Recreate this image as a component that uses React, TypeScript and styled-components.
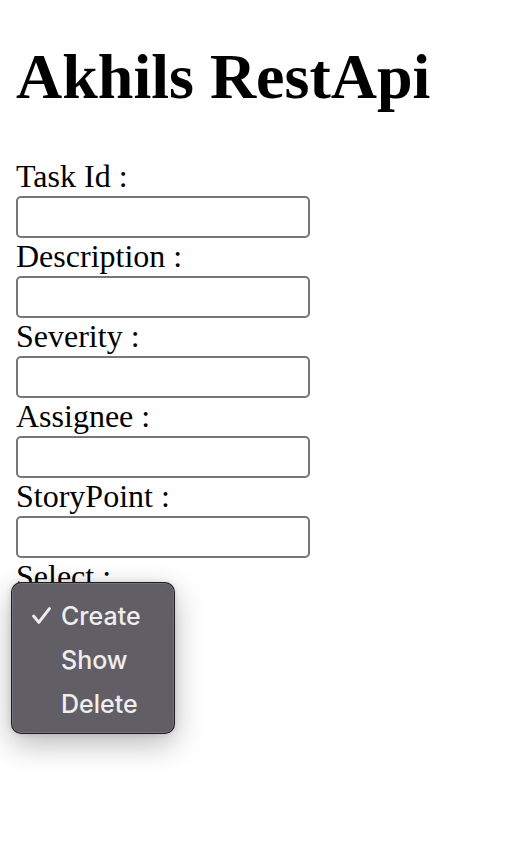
import styled, { createGlobalStyle } from "styled-components";

const GlobalStyle = createGlobalStyle`
  html, body {
    margin: 0;
    padding: 0;
    background: #ffffff;
  }
  body {
    font-family: "Liberation Serif", "Times New Roman", serif;
    color: #000000;
  }
`;

const StyledPage = styled.main`
  padding: 40px 16px 0 16px;
  min-height: 852px;
  box-sizing: border-box;
`;

const StyledTitle = styled.h1`
  margin: 0 0 44px 0;
  font-size: 64px;
  line-height: 74px;
  font-weight: 700;
`;

const StyledForm = styled.form`
  display: flex;
  flex-direction: column;
  align-items: flex-start;
`;

const StyledLabel = styled.label`
  display: block;
  font-size: 32px;
  line-height: 36px;
  height: 36px;
  white-space: nowrap;
`;

const StyledInput = styled.input`
  display: block;
  box-sizing: border-box;
  margin: 2px 0 0 0;
  width: 294px;
  height: 42px;
  border: 2px solid #767676;
  border-radius: 5px;
  background: #ffffff;
  padding: 2px 4px;
  font-size: 26px;
`;

const StyledSelectWrap = styled.div`
  position: relative;
  margin-top: 2px;
`;

const StyledSelect = styled.select`
  display: block;
  width: 140px;
  height: 40px;
  font-size: 26px;
`;

const StyledPopup = styled.ul`
  position: absolute;
  left: -5px;
  top: -14px;
  box-sizing: border-box;
  width: 164px;
  height: 152px;
  margin: 0;
  padding: 11px 0 9px 0;
  list-style: none;
  background: #625e66;
  border: 1px solid rgba(20, 18, 22, 0.85);
  border-radius: 10px;
  box-shadow: inset 0 0 0 1px rgba(255, 255, 255, 0.12),
    0 10px 30px rgba(0, 0, 0, 0.28), 0 0 6px rgba(0, 0, 0, 0.12);
`;

const StyledOption = styled.li`
  position: relative;
  height: 44px;
  line-height: 44px;
  padding-left: 49px;
  font-family: Inter, "Noto Sans", sans-serif;
  font-size: 25px;
  font-weight: 500;
  color: #eeeeee;
`;

const StyledCheck = styled.svg`
  position: absolute;
  left: 20px;
  top: 13px;
  width: 19px;
  height: 17px;
`;

const fields = ["Task Id :", "Description :", "Severity :", "Assignee :", "StoryPoint :"];
const options = ["Create", "Show", "Delete"];

const App = () => {
  return (
    <>
      <GlobalStyle />
      <StyledPage>
        <StyledTitle>Akhils RestApi</StyledTitle>
        <StyledForm>
          {fields.map((f) => (
            <div key={f}>
              <StyledLabel>{f}</StyledLabel>
              <StyledInput type="text" />
            </div>
          ))}
          <StyledLabel>Select :</StyledLabel>
          <StyledSelectWrap>
            <StyledSelect defaultValue="Create">
              {options.map((o) => (
                <option key={o}>{o}</option>
              ))}
            </StyledSelect>
            <StyledPopup>
              {options.map((o, i) => (
                <StyledOption key={o}>
                  {i === 0 && (
                    <StyledCheck viewBox="0 0 18 16">
                      <path
                        d="M1.5 8.5 L6.5 14.5 L16.5 1.5"
                        fill="none"
                        stroke="#eeeeee"
                        strokeWidth="2.8"
                        strokeLinecap="round"
                        strokeLinejoin="round"
                      />
                    </StyledCheck>
                  )}
                  {o}
                </StyledOption>
              ))}
            </StyledPopup>
          </StyledSelectWrap>
        </StyledForm>
      </StyledPage>
    </>
  );
};

export default App;
